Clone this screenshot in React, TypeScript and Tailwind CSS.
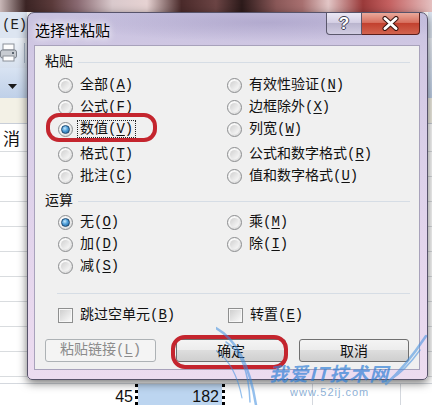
import React from "react";

function Acc({ t, k }: { t: string; k: string }) {
  return (
    <>
      {t}(<span className="underline underline-offset-[2px]">{k}</span>)
    </>
  );
}

function Radio({ checked = false }: { checked?: boolean }) {
  return (
    <span className="flex h-[15px] w-[15px] shrink-0 items-center justify-center rounded-full border border-[#8c8e90] bg-[radial-gradient(circle_at_35%_30%,#ffffff_0%,#f2f2f2_45%,#cfcfcf_100%)]">
      {checked ? (
        <span className="h-[9px] w-[9px] rounded-full border border-[#1d4a73] bg-[radial-gradient(circle_at_40%_35%,#c6eaff_0%,#4f9fd9_45%,#1a578d_100%)]" />
      ) : (
        <span className="h-[9px] w-[9px] rounded-full bg-[linear-gradient(135deg,#d0d0d0,#fafafa)]" />
      )}
    </span>
  );
}

function Check() {
  return (
    <span className="flex h-[15px] w-[15px] shrink-0 items-center justify-center border border-[#8e8f8f] bg-[#f7f7f7]">
      <span className="h-[11px] w-[11px] bg-[linear-gradient(135deg,#cfcfcf,#f9f9f9)]" />
    </span>
  );
}

function Opt({ t, k, checked = false, focus = false }: { t: string; k: string; checked?: boolean; focus?: boolean }) {
  return (
    <div className="flex h-[22px] items-center gap-[7px]">
      <Radio checked={checked} />
      {focus ? (
        <span className="-ml-[3px] border border-dotted border-[#222] px-[2px] leading-[16px]">
          <Acc t={t} k={k} />
        </span>
      ) : (
        <span className="leading-[22px]">
          <Acc t={t} k={k} />
        </span>
      )}
    </div>
  );
}

function Header({ text }: { text: string }) {
  return (
    <div className="flex h-[18px] items-center gap-[5px]">
      <span className="leading-[18px]">{text}</span>
      <div className="h-px flex-1 bg-[#d6dde5]" />
    </div>
  );
}

function GridRows({ n }: { n: number }) {
  return (
    <>
      {Array.from({ length: n }).map((_, i) => (
        <div key={i} className="h-[25px] shrink-0 border-b border-[#d9dcdf]" />
      ))}
    </>
  );
}

export default function App() {
  return (
    <div className="relative flex h-[405px] w-[432px] flex-col overflow-hidden bg-white font-['Liberation_Mono','Noto_Sans_CJK_SC',sans-serif] text-[#111]">
      {/* top blurred strip */}
      <div className="h-[12px] shrink-0 bg-[linear-gradient(90deg,#c9b8b8_0%,#3b2424_6%,#5a3a3a_12%,#8a6a72_18%,#d9c9cc_26%,#e6d2d2_34%,#4a2a2a_42%,#6b4444_50%,#2c1a1a_56%,#8a5858_64%,#a87070_70%,#e2c6c6_76%,#9a3a3a_84%,#c46060_90%,#e4c0c0_100%)]" />

      <div className="flex h-[368px] shrink-0">
        {/* left strip of spreadsheet */}
        <div className="flex w-[27px] flex-col overflow-hidden">
          <div className="flex h-[26px] shrink-0 items-center bg-[#dde5f1] pl-[2px] text-[14px] text-[#222]">(E)</div>
          <div className="flex h-[30px] shrink-0 items-center bg-[linear-gradient(180deg,#eef2f8,#d6e0ee)]">
            <svg width="18" height="20" viewBox="0 0 18 20">
              <rect x="3" y="1" width="11" height="6" fill="#fdfdfd" stroke="#8a8f98" />
              <rect x="0.5" y="7" width="16" height="8" rx="2" fill="#c8ccd2" stroke="#7d838c" />
              <rect x="3" y="13" width="11" height="5" fill="#ffffff" stroke="#8a8f98" />
              <rect x="12" y="9" width="2" height="2" fill="#5a6470" />
            </svg>
            <div className="ml-[6px] h-[20px] w-px bg-[#a8b6c8]" />
          </div>
          <div className="flex h-[30px] shrink-0 items-center justify-end bg-[linear-gradient(180deg,#d8e3f2,#bfd0e8)] pr-[10px] pt-[6px]">
            <svg width="9" height="5" viewBox="0 0 9 5">
              <path d="M0 0 L9 0 L4.5 5 Z" fill="#1a1a1a" />
            </svg>
          </div>
          <div className="h-[26px] shrink-0 border-b border-[#c8ced8] bg-[#f3f1e6]" />
          <div className="flex h-[28px] shrink-0 items-center border-b border-[#d9dcdf] pl-[3px] font-['Noto_Sans_CJK_SC',sans-serif] text-[17px]">消</div>
          <GridRows n={9} />
        </div>

        <div className="flex-1 bg-white" />

        {/* right strip */}
        <div className="flex w-[4px] flex-col overflow-hidden">
          <div className="h-[26px] shrink-0 bg-[#dde5f1]" />
          <div className="h-[30px] shrink-0 bg-[linear-gradient(180deg,#eef2f8,#d6e0ee)]" />
          <div className="h-[30px] shrink-0 bg-[linear-gradient(180deg,#d8e3f2,#bfd0e8)]" />
          <div className="h-[26px] shrink-0 border-b border-[#c8ced8] bg-[#f3f1e6]" />
          <div className="h-[28px] shrink-0 border-b border-[#d9dcdf]" />
          <GridRows n={9} />
        </div>
      </div>

      {/* bottom spreadsheet row */}
      <div className="flex h-[25px] shrink-0 flex-col font-['Liberation_Sans',sans-serif] text-[16px]">
        <div className="h-[3px] shrink-0" />
        <div className="flex flex-1 border-t border-[#d4d8de]">
          <div className="w-[135px] pr-[2px] pt-[4px] text-right leading-[18px]">45</div>
          <div className="w-[3px] bg-[repeating-linear-gradient(180deg,#000_0px,#000_3px,#fff_3px,#fff_6px)]" />
          <div className="w-[84px] bg-[#bcd5f0] pr-[3px] pt-[4px] text-right leading-[18px]">182</div>
          <div className="w-[3px] bg-[repeating-linear-gradient(180deg,#000_0px,#000_3px,#fff_3px,#fff_6px)]" />
          <div className="w-[88px] border-r border-[#d4d8de]" />
          <div className="w-[88px] border-r border-[#d4d8de]" />
          <div className="flex-1" />
        </div>
      </div>

      {/* dialog window */}
      <div className="absolute left-[27px] top-[12px] flex h-[368px] w-[401px] flex-col rounded-b-[5px] rounded-t-[7px] border border-[#57536a] bg-[linear-gradient(180deg,#c7c1df_0%,#d2c9e4_12%,#ddd1ea_45%,#e8d8ee_80%,#ecdcf0_100%)] shadow-[0_3px_10px_rgba(0,0,0,0.55)]">
        <div className="flex h-[32px] shrink-0 items-start bg-[radial-gradient(ellipse_at_60%_30%,rgba(150,140,185,0.45),transparent_60%)]">
          <div className="pl-[7px] pt-[8px] font-['Noto_Sans_CJK_SC',sans-serif] text-[15px] leading-[18px] text-black [text-shadow:0_0_6px_#fff,0_0_10px_#fff]">
            选择性粘贴
          </div>
          <div className="ml-auto mr-[7px] flex">
            <div className="flex h-[22px] w-[36px] items-center justify-center rounded-bl-[4px] border border-t-0 border-[#5b586c] bg-[linear-gradient(180deg,#ebe7f4_0%,#d5d0e4_45%,#bab5ce_50%,#d2cde2_100%)]">
              <span className="font-['Liberation_Sans',sans-serif] text-[17px] font-bold leading-none text-white [text-shadow:-1px_0_#3c3c50,1px_0_#3c3c50,0_-1px_#3c3c50,0_1px_#3c3c50]">
                ?
              </span>
            </div>
            <div className="flex h-[22px] w-[58px] items-center justify-center rounded-br-[4px] border border-l-0 border-t-0 border-[#5a1e1a] bg-[linear-gradient(180deg,#eaa99b_0%,#d7705f_45%,#c2412f_50%,#d2634e_100%)]">
              <svg width="17" height="15" viewBox="0 0 17 15">
                <path d="M3 2.5 L14 12.5 M14 2.5 L3 12.5" stroke="#3a1410" strokeWidth="5" strokeLinecap="round" />
                <path d="M3 2.5 L14 12.5 M14 2.5 L3 12.5" stroke="#ffffff" strokeWidth="3" strokeLinecap="round" />
              </svg>
            </div>
          </div>
        </div>

        {/* client area */}
        <div className="ml-[6px] flex h-[325px] w-[386px] shrink-0 flex-col border border-[#a8a2bb] bg-[#f0f0f0] pl-[10px] pr-[9px] text-[14px] text-[#111]">
          <div className="mt-[7px]">
            <Header text="粘贴" />
          </div>
          <div className="ml-[13px] mt-[3px] flex flex-col">
            <div className="flex">
              <div className="w-[169px]"><Opt t="全部" k="A" /></div>
              <Opt t="有效性验证" k="N" />
            </div>
            <div className="flex">
              <div className="w-[169px]"><Opt t="公式" k="F" /></div>
              <Opt t="边框除外" k="X" />
            </div>
            <div className="flex">
              <div className="w-[169px]"><Opt t="数值" k="V" checked focus /></div>
              <Opt t="列宽" k="W" />
            </div>
            <div className="mt-[3px] flex">
              <div className="w-[169px]"><Opt t="格式" k="T" /></div>
              <Opt t="公式和数字格式" k="R" />
            </div>
            <div className="flex">
              <div className="w-[169px]"><Opt t="批注" k="C" /></div>
              <Opt t="值和数字格式" k="U" />
            </div>
          </div>

          <div className="mt-[5px]">
            <Header text="运算" />
          </div>
          <div className="ml-[13px] mt-[1px] flex flex-col">
            <div className="flex">
              <div className="w-[169px]"><Opt t="无" k="O" checked /></div>
              <Opt t="乘" k="M" />
            </div>
            <div className="flex">
              <div className="w-[169px]"><Opt t="加" k="D" /></div>
              <Opt t="除" k="I" />
            </div>
            <div className="flex">
              <div className="w-[169px]"><Opt t="减" k="S" /></div>
            </div>
          </div>

          <div className="ml-[12px] mt-[16px] h-px shrink-0 bg-[#d6dde5]" />

          <div className="ml-[13px] mt-[10px] flex h-[22px] items-center">
            <div className="flex w-[170px] items-center gap-[7px]">
              <Check />
              <span className="leading-[22px]"><Acc t="跳过空单元" k="B" /></span>
            </div>
            <div className="flex items-center gap-[7px]">
              <Check />
              <span className="leading-[22px]"><Acc t="转置" k="E" /></span>
            </div>
          </div>

          <div className="mt-[13px] flex">
            <div className="flex h-[23px] w-[111px] items-center justify-center rounded-[3px] border border-[#adb2b5] bg-[#f4f4f4] text-[#8b8b8b]">
              <Acc t="粘贴链接" k="L" />
            </div>
            <div className="ml-[20px] flex h-[23px] w-[110px] items-center justify-center rounded-[3px] border border-[#707070] bg-[linear-gradient(180deg,#f4f4f4_0%,#ececec_49%,#dddddd_50%,#cfcfcf_100%)] font-['Noto_Sans_CJK_SC',sans-serif]">
              确定
            </div>
            <div className="ml-[13px] flex h-[23px] w-[110px] items-center justify-center rounded-[3px] border border-[#707070] bg-[linear-gradient(180deg,#f4f4f4_0%,#ececec_49%,#dddddd_50%,#cfcfcf_100%)] font-['Noto_Sans_CJK_SC',sans-serif]">
              取消
            </div>
          </div>
        </div>
      </div>

      {/* red annotation rings */}
      <div className="pointer-events-none absolute left-[46px] top-[113px] h-[29px] w-[111px] rounded-[13px] border-[4px] border-[#c4252e]" />
      <div className="pointer-events-none absolute left-[171px] top-[335px] h-[34px] w-[117px] rounded-[14px] border-[4px] border-[#c4252e]" />

      {/* watermark */}
      <div className="pointer-events-none absolute left-[216px] top-[322px] h-[83px] w-[216px]">
        <svg className="absolute inset-0" width="216" height="83" viewBox="0 0 216 83">
          <g fill="none" stroke="#3f8ee0" strokeLinecap="round" opacity="0.55">
            <path d="M0 6 C 22 18, 34 45, 40 83" strokeWidth="2.5" />
            <path d="M10 20 C 26 30, 33 52, 34 80" strokeWidth="1.5" />
            <path d="M-4 26 C 14 36, 22 55, 26 76" strokeWidth="1.2" />
            <path d="M210 14 C 198 32, 186 48, 170 62" strokeWidth="2.5" />
            <path d="M204 28 C 194 42, 184 52, 174 58" strokeWidth="1.5" />
          </g>
        </svg>
        <div className="absolute left-[53px] top-[40px] font-['Noto_Sans_CJK_SC',sans-serif] text-[19px] font-bold italic leading-[21px] tracking-[1px] text-[#2f7fd6]/70">
          我爱IT技术网
        </div>
        <div className="absolute left-[74px] top-[64px] font-['Liberation_Sans',sans-serif] text-[11px] leading-[13px] tracking-[1px] text-[#6f9ccc]/80">
          www.52ij.com
        </div>
      </div>
    </div>
  );
}
